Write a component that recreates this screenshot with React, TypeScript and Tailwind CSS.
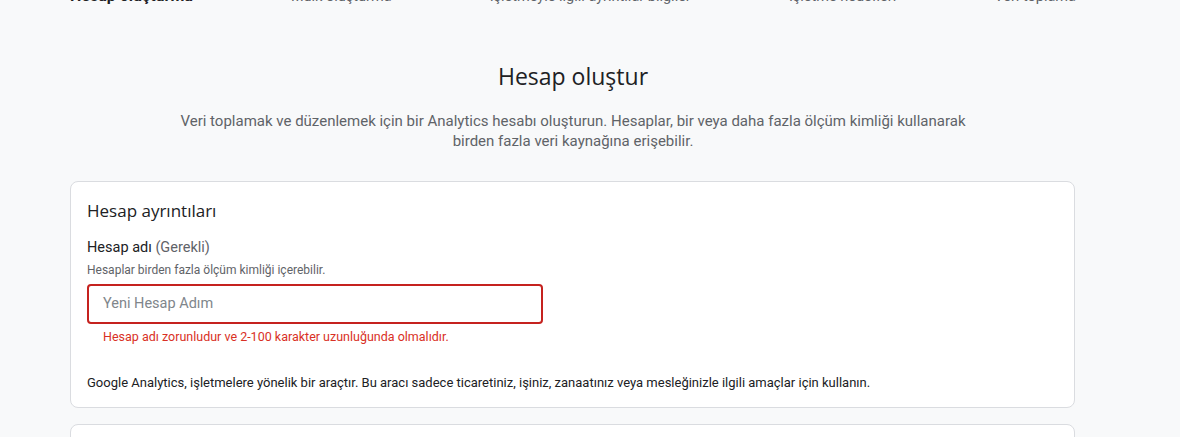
import React from "react";

const steps = [
  { label: "Hesap oluşturma", active: true },
  { label: "Mülk oluşturma", active: false },
  { label: "İşletmeyle ilgili ayrıntılar bilgiler", active: false },
  { label: "İşletme hedefleri", active: false },
  { label: "Veri toplama", active: false },
];

export default function App() {
  return (
    <div
      className="h-[437px] w-[1180px] overflow-hidden bg-[#f8f9fa]"
      style={{ fontFamily: "Roboto, 'Liberation Sans', sans-serif" }}
    >
      <div className="ml-[70px] w-[1006px]">
        <div className="-mt-[14px] flex items-baseline justify-between text-[14.5px] leading-[20px]">
          {steps.map((s) => (
            <span
              key={s.label}
              className={s.active ? "text-[16px] font-bold text-[#202124]" : "text-[#5f6368]"}
            >
              {s.label}
            </span>
          ))}
        </div>

        <h1
          className="mt-[53px] text-center text-[23px] leading-[32px] text-[#202124]"
          style={{ fontFamily: "'Open Sans', Roboto, sans-serif" }}
        >
          Hesap oluştur
        </h1>
        <p className="mx-auto mt-[19px] w-[820px] text-center text-[15px] leading-[20px] text-[#5f6368]">
          Veri toplamak ve düzenlemek için bir Analytics hesabı oluşturun. Hesaplar, bir veya daha fazla ölçüm kimliği kullanarak birden fazla veri kaynağına erişebilir.
        </p>

        <div className="mt-[30px] h-[227px] w-[1005px] rounded-[8px] border border-[#dadce0] bg-white px-[16px] pt-[17px]">
          <h2
            className="text-[17px] leading-[24px] text-[#202124]"
            style={{ fontFamily: "'Open Sans', Roboto, sans-serif" }}
          >
            Hesap ayrıntıları
          </h2>
          <div className="mt-[15px] text-[14.5px] leading-[20px] text-[#202124]">
            Hesap adı <span className="text-[#5f6368]">(Gerekli)</span>
          </div>
          <div className="mt-[4px] text-[12px] leading-[16px] text-[#5f6368]">
            Hesaplar birden fazla ölçüm kimliği içerebilir.
          </div>
          <div className="mt-[6px] flex h-[40px] w-[456px] items-center rounded-[4px] border-2 border-[#c5221f] px-[14px] text-[14.5px] text-[#80868b]">
            Yeni Hesap Adım
          </div>
          <div className="mt-[5px] pl-[16px] text-[12.5px] leading-[16px] text-[#d93025]">
            Hesap adı zorunludur ve 2-100 karakter uzunluğunda olmalıdır.
          </div>
          <div className="mt-[30px] text-[13px] leading-[16px] text-[#202124]">
            Google Analytics, işletmelere yönelik bir araçtır. Bu aracı sadece ticaretiniz, işiniz, zanaatınız veya mesleğinizle ilgili amaçlar için kullanın.
          </div>
        </div>

        <div className="mt-[16px] h-[60px] w-[1005px] rounded-[8px] border border-[#dadce0] bg-white" />
      </div>
    </div>
  );
}
